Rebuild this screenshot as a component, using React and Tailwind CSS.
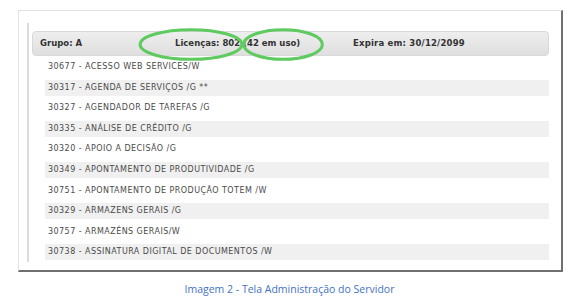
import React from 'react';

const modules = [
  '30677 - ACESSO WEB SERVICES/W',
  '30317 - AGENDA DE SERVIÇOS /G **',
  '30327 - AGENDADOR DE TAREFAS /G',
  '30335 - ANÁLISE DE CRÉDITO /G',
  '30320 - APOIO A DECISÃO /G',
  '30349 - APONTAMENTO DE PRODUTIVIDADE /G',
  '30751 - APONTAMENTO DE PRODUÇÃO TOTEM /W',
  '30329 - ARMAZENS GERAIS /G',
  '30757 - ARMAZÉNS GERAIS/W',
  '30738 - ASSINATURA DIGITAL DE DOCUMENTOS /W',
];

const Highlight = ({ className }) => (
  <svg className={`absolute pointer-events-none ${className}`} viewBox="0 0 100 40" preserveAspectRatio="none">
    <ellipse cx="50" cy="20" rx="48" ry="18" fill="none" stroke="#5fca5f" strokeWidth="3" vectorEffect="non-scaling-stroke" />
  </svg>
);

const App = () => {
  return (
    <div className="w-[579px] h-[302px] bg-white overflow-hidden" style={{ fontFamily: '"DejaVu Sans", Verdana, sans-serif' }}>
      <div className="ml-[18px] mt-[10px] w-[545px] h-[262px] border-t border-l border-t-[#e2e2e2] border-l-[#e2e2e2] border-r-2 border-b-2 border-r-[#707070] border-b-[#707070] pl-[8px] pt-[12px]">
        <div className="border-l-2 border-[#dcdcdc] h-[239px] pl-[3px] pt-[8px]">
          <div className="relative w-[517px] h-[25px] rounded-[4px] border border-[#d8d8d8] bg-gradient-to-b from-[#eeeeee] to-[#dfdfdf] flex items-center text-[8.5px] font-bold text-[#333]">
            <span className="ml-[7px] w-[135px]">Grupo: A</span>
            <span className="w-[178px]">Licenças: 802 (42 em uso)</span>
            <span className="tracking-[0.2px]">Expira em: 30/12/2099</span>
            <Highlight className="left-[105px] top-[-4px] w-[106px] h-[33px]" />
            <Highlight className="left-[209px] top-[-4px] w-[82px] h-[33px]" />
          </div>
          <div className="ml-[13px] mt-[3px] w-[504px] flex flex-col gap-[4.6px]">
            {modules.map((m, i) => (
              <div
                key={m}
                className={`h-[16px] flex items-center pl-[3px] text-[8px] tracking-[0.45px] text-[#4a4a4a] ${i % 2 === 1 ? 'bg-[#f0f0f0]' : ''}`}
              >
                {m}
              </div>
            ))}
          </div>
        </div>
      </div>
      <div className="mt-[10px] text-center text-[10.5px] text-[#4472c4]" style={{ fontFamily: '"Open Sans", Calibri, sans-serif' }}>
        Imagem 2 - Tela Administração do Servidor
      </div>
    </div>
  );
};

export default App;
